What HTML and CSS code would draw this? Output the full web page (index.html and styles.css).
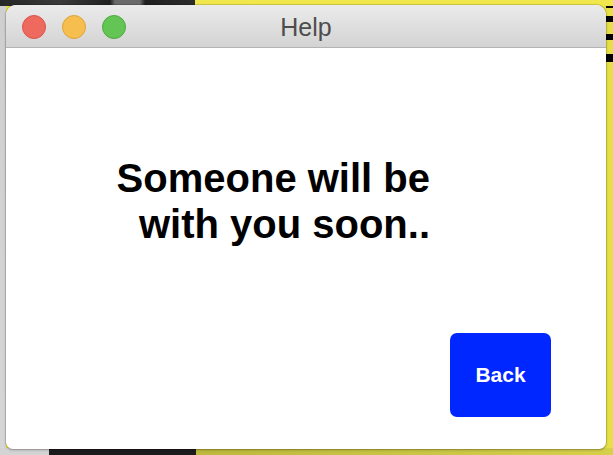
FILE: index.html
```html
<!DOCTYPE html>
<html>
<head>
<meta charset="utf-8">
<link rel="stylesheet" href="styles.css">
</head>
<body>
<div class="desktop">
  <div class="window">
    <div class="titlebar">
      <div class="lights">
        <span class="light red"></span>
        <span class="light yellow"></span>
        <span class="light green"></span>
      </div>
      <div class="title">Help</div>
    </div>
    <div class="content">
      <div class="message">Someone will be<br>with you soon..</div>
      <button class="back">Back</button>
    </div>
  </div>
</div>
</body>
</html>
```
FILE: styles.css
```css
html, body {
  margin: 0;
  padding: 0;
}
body {
  width: 613px;
  height: 455px;
  overflow: hidden;
  font-family: "Liberation Sans", Arial, sans-serif;
}
.desktop {
  width: 613px;
  height: 455px;
  box-sizing: border-box;
  padding: 5px 7px 6px 6px;
  display: flex;
  background:
    linear-gradient(to right, #262626 0, #3a3a3a 60px, #202020 110px, #6a6a6a 115px, #6a6a6a 140px, #202020 145px, #2c2c2c 195px, #efe74c 195px) top left / 100% 6px no-repeat,
    linear-gradient(to right, #d4d4d4 0, #d4d4d4 49px, #1c1c1e 49px, #1c1c1e 196px, #bdb93c 196px, #d6d04a 100%) bottom left / 100% 7px no-repeat,
    linear-gradient(to bottom, #000 0, #000 8px, #e6df48 8px, #e6df48 16px, #000 16px, #000 22px, #e6df48 22px, #e6df48 34px, #000 34px, #000 40px, #e6df48 40px, #e6df48 54px, #000 54px, #000 62px, #e6df48 62px) top right / 7px 100% no-repeat,
    linear-gradient(to bottom, #cfcfcf, #d6d6d6) top left / 6px 100% no-repeat,
    #e6df48;
}
.window {
  flex: 1;
  display: flex;
  flex-direction: column;
  background: #fff;
  border-radius: 10px 10px 7px 7px;
  overflow: hidden;
  box-shadow: 0 0 0 1px rgba(0,0,0,0.12), 0 1px 3px rgba(0,0,0,0.25);
}
.titlebar {
  position: relative;
  height: 42px;
  flex: none;
  background: linear-gradient(to bottom, #ebebeb, #d3d3d3);
  border-bottom: 1px solid #b3b3b3;
  display: flex;
  align-items: center;
  justify-content: center;
}
.lights {
  position: absolute;
  left: 16px;
  top: 10px;
  display: flex;
  gap: 16px;
}
.light {
  width: 24px;
  height: 24px;
  border-radius: 50%;
  box-sizing: border-box;
}
.red { background: #ee6a5f; border: 1px solid #d8534a; }
.yellow { background: #f6be4f; border: 1px solid #dea23a; }
.green { background: #62c554; border: 1px solid #4ea83f; }
.title {
  font-size: 25px;
  color: #4d4d4d;
  margin-top: 2px;
}
.content {
  flex: 1;
  display: flex;
  flex-direction: column;
  padding: 107px 55px 32px 0;
}
.message {
  align-self: flex-end;
  margin-right: 121px;
  text-align: right;
  font-weight: bold;
  font-size: 40px;
  line-height: 46px;
  color: #000;
}
.back {
  margin-top: auto;
  align-self: flex-end;
  width: 101px;
  height: 84px;
  border: none;
  border-radius: 7px;
  background: #0027ff;
  color: #fff;
  font-family: "Liberation Sans", Arial, sans-serif;
  font-weight: bold;
  font-size: 21px;
  padding: 0;
}
```
